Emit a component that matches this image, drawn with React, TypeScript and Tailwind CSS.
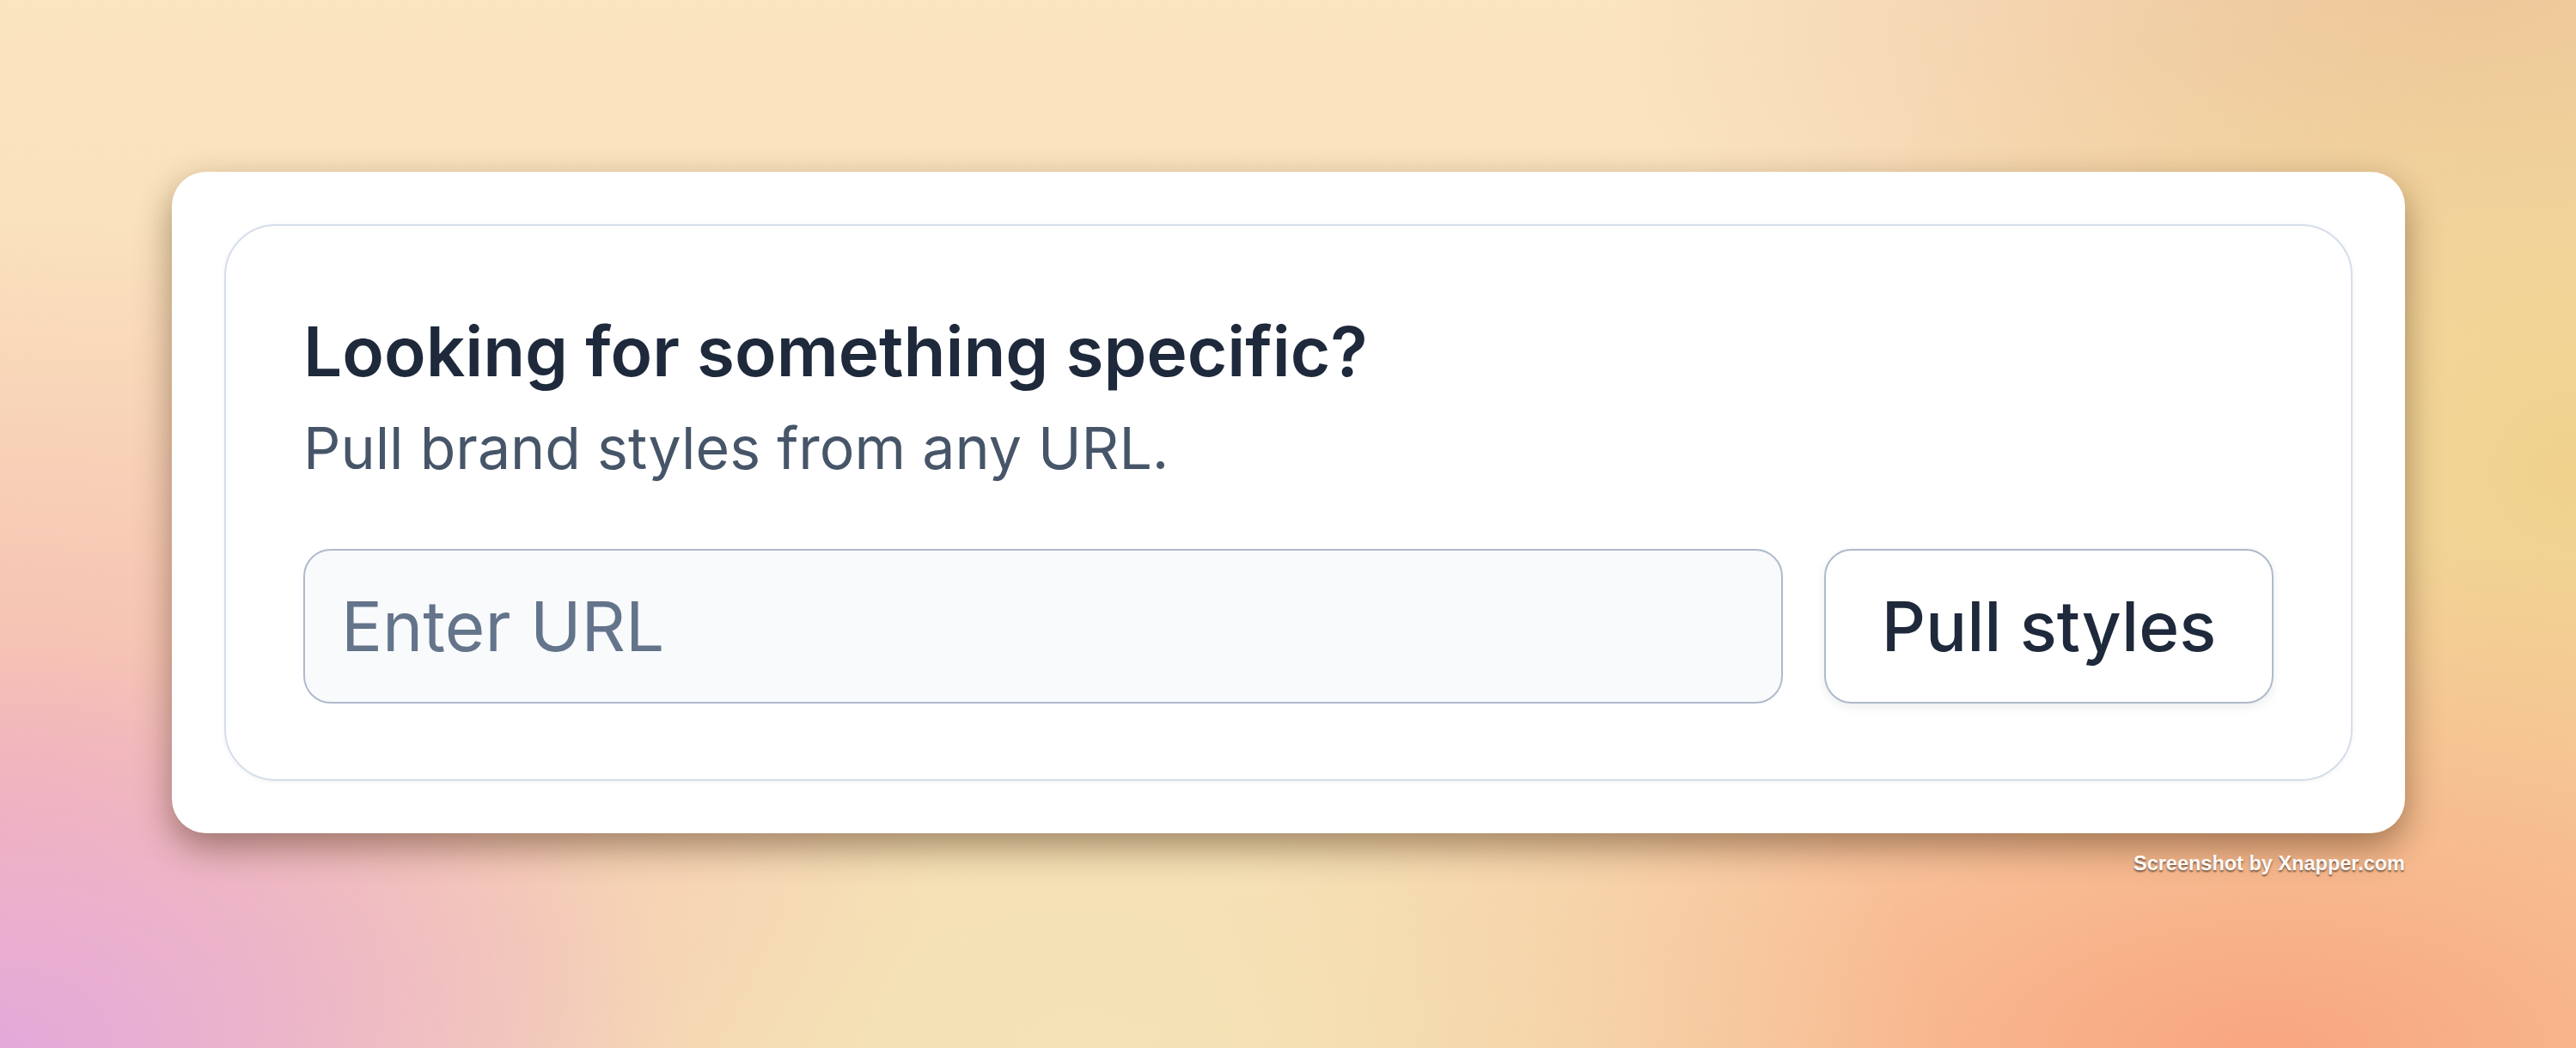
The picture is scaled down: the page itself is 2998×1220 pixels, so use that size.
import React from "react";

export default function App() {
  return (
    <div
      className="relative h-[1220px] w-full overflow-hidden bg-[radial-gradient(800px_480px_at_0%_100%,#e5a8da_0%,rgba(229,168,218,0)_100%),radial-gradient(1100px_700px_at_0%_78%,#f5b8b2_0%,rgba(245,184,178,0)_100%),radial-gradient(1000px_520px_at_42%_100%,#f3e3b6_0%,rgba(243,227,182,0)_100%),radial-gradient(1300px_600px_at_88%_100%,#f8a67f_0%,rgba(248,166,127,0)_100%),radial-gradient(900px_800px_at_100%_45%,#f0d28d_0%,rgba(240,210,141,0)_100%),radial-gradient(1000px_500px_at_96%_0%,#ecc29e_0%,rgba(236,194,158,0)_100%),linear-gradient(180deg,#fbe4c0_0%,#f8dcb2_100%)]"
      style={{ fontFamily: "Inter, 'Noto Sans', sans-serif" }}
    >
      <div className="ml-[200px] flex w-[2599px] flex-col pt-[200px]">
        <div className="rounded-[40px] bg-white p-[61px] shadow-[0_16px_40px_rgba(70,40,15,0.48)]">
          <div className="rounded-[60px] border-2 border-[#d6dee9] px-[90px] pb-[88px] pt-[93px] shadow-[0_1px_6px_rgba(15,23,42,0.05)]">
            <h2 className="text-[80px] font-semibold leading-[106.7px] text-[#1e293b]">
              Looking for something specific?
            </h2>
            <p className="mt-[12px] text-[68px] font-normal leading-[93.3px] text-[#475569]">
              Pull brand styles from any URL.
            </p>
            <div className="mt-[71px] flex items-stretch gap-[48px]">
              <div className="flex h-[180px] flex-1 items-center rounded-[32px] border-2 border-[#afbacb] bg-[#f8fafc] pl-[42px]">
                <span className="text-[80px] leading-none text-[#64748b]">Enter URL</span>
              </div>
              <button className="flex h-[180px] w-[523px] flex-none items-center justify-center rounded-[32px] border-2 border-[#afbacb] bg-white text-[80px] font-medium leading-none text-[#1e293b] shadow-[0_4px_12px_rgba(15,23,42,0.08)]">
                Pull styles
              </button>
            </div>
          </div>
        </div>
        <div className="mt-[24px] flex justify-end">
          <span
            className="text-[23.5px] font-bold leading-none text-[#fdf8f4] [text-shadow:0_2px_2px_rgba(0,0,0,0.5)]"
            style={{ fontFamily: "'Liberation Sans', Arial, sans-serif" }}
          >
            Screenshot by Xnapper.com
          </span>
        </div>
      </div>
    </div>
  );
}
